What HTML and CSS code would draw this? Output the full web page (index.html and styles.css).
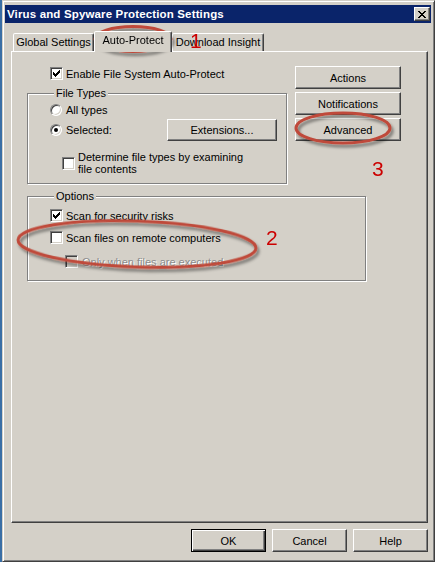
FILE: index.html
```html
<!DOCTYPE html>
<html>
<head>
<meta charset="utf-8">
<title>Virus and Spyware Protection Settings</title>
<link rel="stylesheet" href="styles.css">
</head>
<body>
<div class="window">
  <div class="titlebar">
    <span class="title">Virus and Spyware Protection Settings</span>
    <button class="close" aria-label="Close">
      <svg width="8" height="7" viewBox="0 0 8 7" shape-rendering="crispEdges"><path fill="#000" d="M0 0h2v1h-2zM6 0h2v1h-2zM1 1h2v1h-2zM5 1h2v1h-2zM2 2h4v1h-4zM3 3h2v1h-2zM2 4h4v1h-4zM1 5h2v1h-2zM5 5h2v1h-2zM0 6h2v1h-2zM6 6h2v1h-2z"/></svg>
    </button>
  </div>

  <div class="tabs">
    <div class="tab tab-global">Global Settings</div>
    <div class="tab tab-active">Auto-Protect</div>
    <div class="tab tab-download">Download Insight</div>
  </div>

  <div class="panel">
    <div class="top">
      <div class="left">
        <div class="row enable">
          <span class="cb"><svg class="tick" width="7" height="7" viewBox="0 0 7 7" shape-rendering="crispEdges"><path d="M0 2H1V3H2V4H3V3H4V2H5V1H6V0H7V3H6V4H5V5H4V6H3V7H2V6H1V5H0Z"/></svg></span>
          <span>Enable File System Auto-Protect</span>
        </div>
        <div class="group filetypes">
          <div class="legend">File Types</div>
          <div class="row r-all"><span class="radio"></span><span>All types</span></div>
          <div class="row r-sel"><span class="radio on"></span><span>Selected:</span><button class="btn ext">Extensions...</button></div>
          <div class="row r-det">
            <span class="cb"></span>
            <span class="two-line">Determine file types by examining<br>file contents</span>
          </div>
        </div>
      </div>
      <div class="side">
        <button class="btn side-btn">Actions</button>
        <button class="btn side-btn">Notifications</button>
        <button class="btn side-btn">Advanced</button>
      </div>
    </div>

    <div class="group options">
      <div class="legend">Options</div>
      <div class="row o1">
        <span class="cb"><svg class="tick" width="7" height="7" viewBox="0 0 7 7" shape-rendering="crispEdges"><path d="M0 2H1V3H2V4H3V3H4V2H5V1H6V0H7V3H6V4H5V5H4V6H3V7H2V6H1V5H0Z"/></svg></span>
        <span>Scan for security risks</span>
      </div>
      <div class="row o2">
        <span class="cb"></span>
        <span>Scan files on remote computers</span>
      </div>
      <div class="row o3">
        <span class="cb disabled"></span>
        <span class="disabled-text">Only when files are executed</span>
      </div>
    </div>
  </div>

  <div class="footer">
    <button class="btn foot default">OK</button>
    <button class="btn foot">Cancel</button>
    <button class="btn foot">Help</button>
  </div>
</div>

<svg class="annot" width="435" height="562" viewBox="0 0 435 562">
  <defs>
    <filter id="sh" x="-20%" y="-40%" width="140%" height="180%">
      <feDropShadow dx="2" dy="3" stdDeviation="1.8" flood-color="#000" flood-opacity="0.45"/>
    </filter>
  </defs>
  <g fill="none" stroke="#bf4a3a" stroke-width="3" filter="url(#sh)">
    <ellipse cx="133" cy="39" rx="38" ry="12.5"/>
    <ellipse cx="137" cy="244" rx="119" ry="23" transform="rotate(2 137 244)"/>
    <ellipse cx="343" cy="128" rx="47" ry="15"/>
  </g>
</svg>
<span class="num n1">1</span>
<span class="num n2">2</span>
<span class="num n3">3</span>
</body>
</html>
```

FILE: styles.css
```css
body {
  margin: 0;
  background: #3a6ea5;
  font-family: "Liberation Sans", Arial, sans-serif;
  font-size: 11px;
  color: #000;
  overflow: hidden;
}

.window {
  box-sizing: border-box;
  width: 433px;
  height: 562px;
  margin-left: 2px;
  background: #d4d0c8;
  border: 1px solid;
  border-color: #d4d0c8 #404040 #404040 #d4d0c8;
  box-shadow: inset 1px 1px #fff, inset -1px -1px #808080;
  padding: 4px 3px 0 2px;
}

.titlebar {
  height: 18px;
  background: #0a246a;
  display: flex;
  align-items: center;
  padding: 0 1px 0 2px;
}

.title {
  color: #fff;
  font-weight: bold;
  font-size: 11.5px;
  letter-spacing: 0.15px;
}

.close {
  margin-left: auto;
  box-sizing: border-box;
  width: 16px;
  height: 14px;
  padding: 0;
  background: #d4d0c8;
  border: 1px solid;
  border-color: #fff #404040 #404040 #fff;
  box-shadow: inset -1px -1px #808080;
  display: flex;
  align-items: center;
  justify-content: center;
}

.tabs {
  display: flex;
  align-items: flex-end;
  height: 20px;
  margin: 8px 0 0 8px;
}

.tab {
  box-sizing: border-box;
  height: 18px;
  border: 1px solid;
  border-bottom: none;
  border-color: #fff #404040 transparent #fff;
  box-shadow: inset -1px 0 #808080;
  border-radius: 2px 2px 0 0;
  text-align: center;
  line-height: 16px;
  background: #d4d0c8;
  white-space: nowrap;
}

.tab-global { width: 81px; }
.tab-download { width: 92px; }

.tab-active {
  width: 78px;
  height: 21px;
  margin-bottom: -1px;
  line-height: 17px;
  position: relative;
  z-index: 1;
}

.panel {
  box-sizing: border-box;
  width: 417px;
  height: 472px;
  margin-left: 6px;
  border: 1px solid;
  border-color: #fff #404040 #404040 #fff;
  box-shadow: inset -1px -1px #808080;
  padding: 14px 0 0 15px;
}

.top {
  display: flex;
  gap: 8px;
}

.left {
  width: 260px;
}

.row {
  display: flex;
  align-items: center;
  white-space: nowrap;
}

.enable {
  height: 15px;
  margin-left: 23px;
  gap: 3px;
}

.group {
  box-sizing: border-box;
  border: 1px solid #808080;
  box-shadow: inset 1px 1px #fff, 1px 1px #fff;
}

.legend {
  display: block;
  width: fit-content;
  height: 13px;
  line-height: 13px;
  margin: -7px 0 0 4px;
  padding: 0 2px;
  background: #d4d0c8;
}

.filetypes {
  margin-top: 12px;
  padding: 0 9px 8px 22px;
}

.r-all {
  height: 16px;
  gap: 4px;
  margin-top: 2px;
}

.r-sel {
  height: 22px;
  margin-top: 1px;
  gap: 4px;
}

.r-det {
  margin-top: 10px;
  margin-left: 12px;
  gap: 3px;
}

.two-line {
  line-height: 12px;
}

.options {
  width: 339px;
  margin-top: 12px;
  padding: 0 0 11px 22px;
}

.o1, .o2, .o3 {
  height: 15px;
  gap: 3px;
}

.o1 { margin-top: 5px; }
.o2 { margin-top: 7px; }
.o3 { margin-top: 9px; margin-left: 15px; gap: 4px; }

.disabled-text {
  color: #8c8c8c;
  text-shadow: 1px 1px #fff;
}

.cb {
  box-sizing: border-box;
  flex: none;
  width: 13px;
  height: 13px;
  background: #fff;
  border: 1px solid;
  border-color: #808080 #fff #fff #808080;
  box-shadow: inset 1px 1px #404040, inset -1px -1px #d4d0c8;
  display: flex;
  align-items: center;
  justify-content: center;
}

.cb.disabled {
  background: #d4d0c8;
}

.tick path { fill: #000; }

.radio {
  box-sizing: border-box;
  flex: none;
  width: 12px;
  height: 12px;
  border-radius: 50%;
  background: #fff;
  border: 1px solid;
  border-color: #808080 #fff #fff #808080;
  box-shadow: inset 1px 1px #404040, inset -1px -1px #d4d0c8;
  display: flex;
  align-items: center;
  justify-content: center;
}

.radio.on::after {
  content: "";
  width: 4px;
  height: 4px;
  border-radius: 50%;
  background: #000;
}

.btn {
  box-sizing: border-box;
  padding: 0;
  margin: 0;
  background: #d4d0c8;
  border: 1px solid;
  border-color: #fff #404040 #404040 #fff;
  box-shadow: inset -1px -1px #808080;
  font-family: "Liberation Sans", Arial, sans-serif;
  font-size: 11px;
  color: #000;
  text-align: center;
}

.ext {
  margin-left: auto;
  width: 110px;
  height: 22px;
}

.side {
  display: flex;
  flex-direction: column;
  gap: 3px;
}

.side-btn {
  width: 106px;
  height: 23px;
}

.footer {
  display: flex;
  justify-content: flex-end;
  gap: 6px;
  margin: 6px 3px 0 0;
}

.foot {
  width: 75px;
  height: 23px;
}

.foot.default {
  border: 1px solid #000;
  box-shadow: inset 1px 1px #fff, inset -1px -1px #404040, inset -2px -2px #808080;
}

.annot {
  position: absolute;
  left: 0;
  top: 0;
  pointer-events: none;
}

.num {
  position: absolute;
  font-family: "Liberation Sans", Arial, sans-serif;
  font-size: 21px;
  line-height: 1;
  color: #cc0000;
}

.n1 { left: 190px; top: 30px; }
.n2 { left: 266px; top: 227px; }
.n3 { left: 372px; top: 158px; }
```
